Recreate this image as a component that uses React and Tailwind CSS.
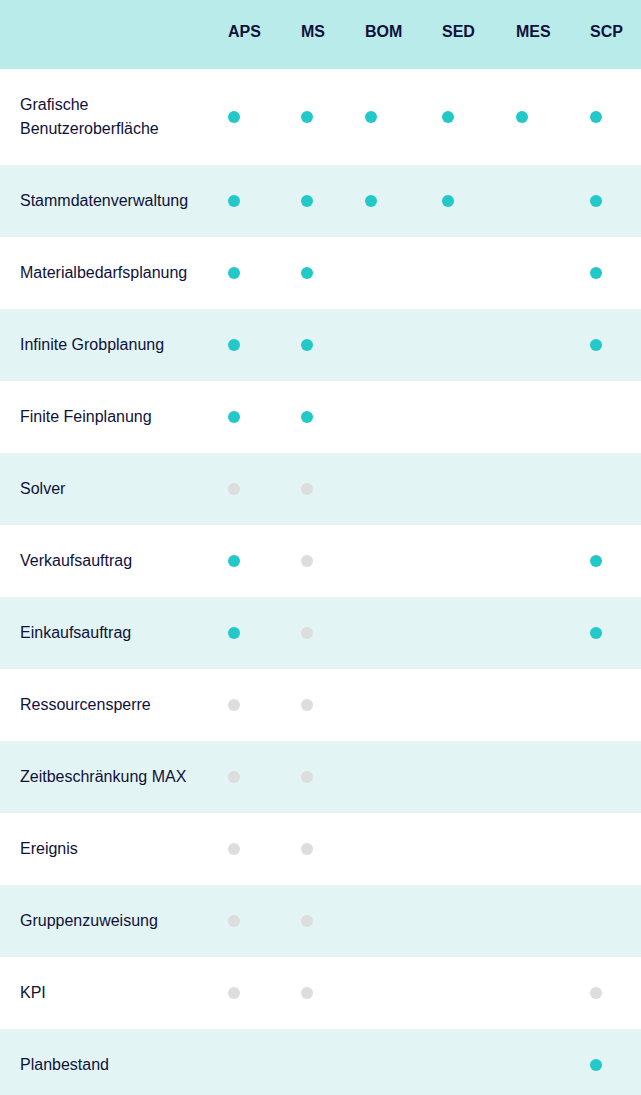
import React from 'react';

const columns = ['APS', 'MS', 'BOM', 'SED', 'MES', 'SCP'];

// t = teal (enthalten), g = grau (optional), '' = nichts
const rows = [
  { label: 'Grafische Benutzeroberfläche', v: ['t', 't', 't', 't', 't', 't'] },
  { label: 'Stammdatenverwaltung', v: ['t', 't', 't', 't', '', 't'] },
  { label: 'Materialbedarfsplanung', v: ['t', 't', '', '', '', 't'] },
  { label: 'Infinite Grobplanung', v: ['t', 't', '', '', '', 't'] },
  { label: 'Finite Feinplanung', v: ['t', 't', '', '', '', ''] },
  { label: 'Solver', v: ['g', 'g', '', '', '', ''] },
  { label: 'Verkaufsauftrag', v: ['t', 'g', '', '', '', 't'] },
  { label: 'Einkaufsauftrag', v: ['t', 'g', '', '', '', 't'] },
  { label: 'Ressourcensperre', v: ['g', 'g', '', '', '', ''] },
  { label: 'Zeitbeschränkung MAX', v: ['g', 'g', '', '', '', ''] },
  { label: 'Ereignis', v: ['g', 'g', '', '', '', ''] },
  { label: 'Gruppenzuweisung', v: ['g', 'g', '', '', '', ''] },
  { label: 'KPI', v: ['g', 'g', '', '', '', 'g'] },
  { label: 'Planbestand', v: ['', '', '', '', '', 't'] },
];

const grid = 'grid grid-cols-[228px_73px_64px_77px_74px_74px_1fr]';

function Dot({ kind }) {
  if (kind === 't') return <span className="block w-3 h-3 rounded-full bg-[#22c9c8]" />;
  if (kind === 'g') return <span className="block w-3 h-3 rounded-full bg-[#dddddd]" />;
  return null;
}

export default function App() {
  return (
    <div className="w-[641px] bg-white text-[#10113a] text-[16px] leading-6" style={{ fontFamily: '"Liberation Sans", Arial, sans-serif' }}>
      <div className={`${grid} h-[69px] bg-[#b9ebea] pt-5 font-bold`}>
        <div />
        {columns.map(c => (
          <div key={c}>{c}</div>
        ))}
      </div>
      {rows.map((r, i) => (
        <div key={r.label} className={`${grid} items-center py-6 ${i % 2 === 1 ? 'bg-[#e2f4f4]' : 'bg-white'}`}>
          <div className="pl-5 pr-5">{r.label}</div>
          {r.v.map((k, j) => (
            <div key={j} className="flex items-center">
              <Dot kind={k} />
            </div>
          ))}
        </div>
      ))}
    </div>
  );
}
